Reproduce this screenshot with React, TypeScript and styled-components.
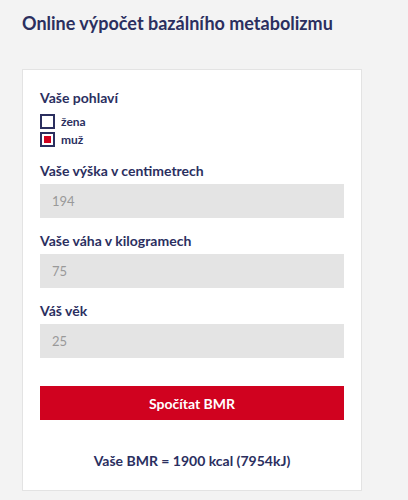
import React, { useState } from 'react';
import styled, { createGlobalStyle } from 'styled-components';

const GlobalStyle = createGlobalStyle`
  html, body {
    margin: 0;
    padding: 0;
    background: #f3f3f3;
    font-family: Lato, "Open Sans", Arial, sans-serif;
  }
`;

const Page = styled.div`
  padding: 11px 22px 0 22px;
`;

const Title = styled.h1`
  margin: 0;
  font-size: 18px;
  line-height: 24px;
  font-weight: 700;
  color: #2b2f5f;
`;

const Card = styled.form`
  margin-top: 34px;
  width: 340px;
  box-sizing: border-box;
  background: #fff;
  border: 1px solid #e3e3e3;
  padding: 19px 17px 20px 17px;
  display: flex;
  flex-direction: column;
`;

const Label = styled.div`
  font-size: 14px;
  line-height: 18px;
  font-weight: 700;
  color: #2b2f5f;
`;

const Options = styled.div`
  display: flex;
  flex-direction: column;
  gap: 3px;
  margin-top: 7px;
  margin-bottom: 15px;
`;

const Option = styled.label`
  display: flex;
  align-items: center;
  gap: 6px;
  font-size: 12px;
  font-weight: 700;
  color: #2b2f5f;
  cursor: pointer;
`;

const Box = styled.span<{ $checked: boolean }>`
  width: 15px;
  height: 15px;
  box-sizing: border-box;
  border: 2px solid #2b2f5f;
  display: flex;
  align-items: center;
  justify-content: center;
  &::after {
    content: '';
    width: 7px;
    height: 7px;
    background: ${p => (p.$checked ? '#d0021f' : 'transparent')};
  }
`;

const Field = styled.div`
  display: flex;
  flex-direction: column;
  gap: 4px;
  margin-bottom: 14px;
`;

const Input = styled.input`
  height: 34px;
  box-sizing: border-box;
  border: none;
  outline: none;
  background: #e4e4e4;
  padding: 0 12px;
  font-family: Lato, Arial, sans-serif;
  font-size: 13px;
  color: #999;
`;

const Submit = styled.button`
  margin-top: 14px;
  height: 34px;
  border: none;
  background: #d0021f;
  color: #fff;
  font-family: Lato, Arial, sans-serif;
  font-size: 14px;
  font-weight: 700;
  cursor: pointer;
`;

const Result = styled.div`
  margin-top: 32px;
  text-align: center;
  font-size: 14px;
  line-height: 18px;
  font-weight: 700;
  color: #2b2f5f;
`;

export default function App() {
  const [gender, setGender] = useState<'zena' | 'muz'>('muz');
  const [height, setHeight] = useState('194');
  const [weight, setWeight] = useState('75');
  const [age, setAge] = useState('25');

  return (
    <Page>
      <GlobalStyle />
      <Title>Online výpočet bazálního metabolizmu</Title>
      <Card onSubmit={e => e.preventDefault()}>
        <Label>Vaše pohlaví</Label>
        <Options>
          <Option onClick={() => setGender('zena')}>
            <Box $checked={gender === 'zena'} />
            žena
          </Option>
          <Option onClick={() => setGender('muz')}>
            <Box $checked={gender === 'muz'} />
            muž
          </Option>
        </Options>
        <Field>
          <Label>Vaše výška v centimetrech</Label>
          <Input value={height} onChange={e => setHeight(e.target.value)} />
        </Field>
        <Field>
          <Label>Vaše váha v kilogramech</Label>
          <Input value={weight} onChange={e => setWeight(e.target.value)} />
        </Field>
        <Field>
          <Label>Váš věk</Label>
          <Input value={age} onChange={e => setAge(e.target.value)} />
        </Field>
        <Submit type="submit">Spočítat BMR</Submit>
        <Result>Vaše BMR = 1900 kcal (7954kJ)</Result>
      </Card>
    </Page>
  );
}
